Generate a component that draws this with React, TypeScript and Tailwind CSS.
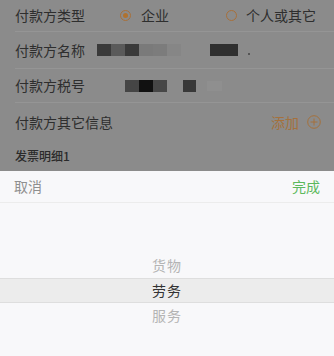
const FONT = { fontFamily: '"Noto Sans CJK SC", "Noto Sans", sans-serif' };

const NAME_BLOCKS = ["bg-[#3a3a3a]", "bg-[#5a5a5a]", "bg-[#3a3a3a]", "bg-[#7a7a7a]", "bg-[#7c7c7c]", "bg-[#868686]"];
const TAX_BLOCKS = ["bg-[#454545]", "bg-[#111111]", "bg-[#474747]"];

function Radio({ checked }: { checked: boolean }) {
  return (
    <span className="flex h-[11px] w-[11px] items-center justify-center rounded-full border border-[#a8703a]">
      {checked && <span className="h-[5px] w-[5px] rounded-full bg-[#b0722f]" />}
    </span>
  );
}

export default function App() {
  return (
    <div className="flex h-[356px] w-[334px] flex-col overflow-hidden bg-[#f8f8fa]" style={FONT}>
      <div className="flex h-[171px] flex-col bg-[#8b8b8b] text-[14px] text-[#2e2e2e]">
        <div className="ml-[15px] flex h-[32px] items-center border-b border-[#959595]">
          <span className="w-[92px]">付款方类型</span>
          <span className="ml-[13px] flex items-center gap-[10px]">
            <Radio checked />
            企业
          </span>
          <span className="ml-[57px] flex items-center gap-[9px]">
            <Radio checked={false} />
            个人或其它
          </span>
        </div>
        <div className="ml-[15px] flex h-[37px] items-center border-b border-[#959595]">
          <span className="w-[82px]">付款方名称</span>
          <span className="flex h-[12px]">
            {NAME_BLOCKS.map((c, i) => (
              <span key={i} className={`h-full w-[14px] ${c}`} />
            ))}
          </span>
          <span className="ml-[29px] h-[12px] w-[28px] bg-[#2f2f2f]" />
          <span className="ml-[10px] mt-[8px] h-[2px] w-[2px] bg-[#555]" />
        </div>
        <div className="ml-[15px] flex h-[34px] items-center border-b border-[#959595]">
          <span className="w-[110px]">付款方税号</span>
          <span className="flex h-[12px]">
            {TAX_BLOCKS.map((c, i) => (
              <span key={i} className={`h-full w-[14px] ${c}`} />
            ))}
          </span>
          <span className="ml-[16px] h-[12px] w-[13px] bg-[#383838]" />
          <span className="ml-[11px] h-[10px] w-[15px] bg-[#8f8f8f]" />
        </div>
        <div className="flex h-[38px] items-center justify-between pl-[15px] pr-[13px]">
          <span>付款方其它信息</span>
          <span className="flex items-center gap-[8px] text-[#a5713c]">
            添加
            <svg width="14" height="14" viewBox="0 0 14 14" fill="none">
              <circle cx="7" cy="7" r="6.3" stroke="#a5713c" strokeWidth="1" />
              <path d="M3.5 7h7M7 3.5v7" stroke="#a5713c" strokeWidth="1" />
            </svg>
          </span>
        </div>
        <div className="flex flex-1 items-center pl-[15px] text-[12px] font-medium text-[#2a2a2a]">发票明细1</div>
      </div>

      <div className="flex h-[32px] items-center justify-between border-b border-[#ececec] px-[14px] text-[14px]">
        <span className="text-[#8f8f8f]">取消</span>
        <span className="text-[#5cb85c]">完成</span>
      </div>

      <div className="flex flex-col items-center pt-[50px] text-[14px] tracking-[1px]">
        <div className="flex h-[25px] w-full items-center justify-center text-[#b4b4b4]">货物</div>
        <div className="flex h-[25px] w-full items-center justify-center border-y border-[#dedede] bg-[#ececec] text-[#333]">劳务</div>
        <div className="flex h-[25px] w-full items-center justify-center text-[#b4b4b4]">服务</div>
      </div>
    </div>
  );
}
